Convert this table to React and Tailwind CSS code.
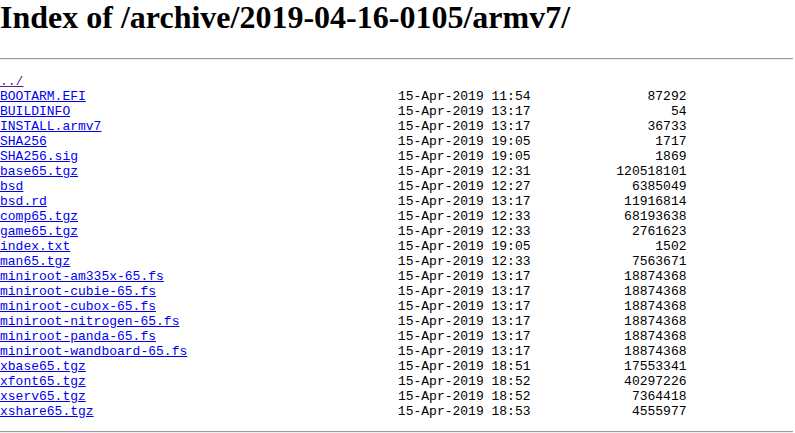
import React from "react";

const rows = [
  ["BOOTARM.EFI", "15-Apr-2019 11:54", "87292"],
  ["BUILDINFO", "15-Apr-2019 13:17", "54"],
  ["INSTALL.armv7", "15-Apr-2019 13:17", "36733"],
  ["SHA256", "15-Apr-2019 19:05", "1717"],
  ["SHA256.sig", "15-Apr-2019 19:05", "1869"],
  ["base65.tgz", "15-Apr-2019 12:31", "120518101"],
  ["bsd", "15-Apr-2019 12:27", "6385049"],
  ["bsd.rd", "15-Apr-2019 13:17", "11916814"],
  ["comp65.tgz", "15-Apr-2019 12:33", "68193638"],
  ["game65.tgz", "15-Apr-2019 12:33", "2761623"],
  ["index.txt", "15-Apr-2019 19:05", "1502"],
  ["man65.tgz", "15-Apr-2019 12:33", "7563671"],
  ["miniroot-am335x-65.fs", "15-Apr-2019 13:17", "18874368"],
  ["miniroot-cubie-65.fs", "15-Apr-2019 13:17", "18874368"],
  ["miniroot-cubox-65.fs", "15-Apr-2019 13:17", "18874368"],
  ["miniroot-nitrogen-65.fs", "15-Apr-2019 13:17", "18874368"],
  ["miniroot-panda-65.fs", "15-Apr-2019 13:17", "18874368"],
  ["miniroot-wandboard-65.fs", "15-Apr-2019 13:17", "18874368"],
  ["xbase65.tgz", "15-Apr-2019 18:51", "17553341"],
  ["xfont65.tgz", "15-Apr-2019 18:52", "40297226"],
  ["xserv65.tgz", "15-Apr-2019 18:52", "7364418"],
  ["xshare65.tgz", "15-Apr-2019 18:53", "4555977"],
];

export default function App() {
  return (
    <div className="bg-white text-black min-h-[433px] overflow-hidden">
      <h1
        className="m-0 -mt-px text-[32px] leading-[37px] font-bold whitespace-nowrap"
        style={{ fontFamily: '"Liberation Serif", "Times New Roman", serif' }}
      >
        Index of /archive/2019-04-16-0105/armv7/
      </h1>
      <div className="mt-[22px] mr-[2px] border-t border-t-[#9a9a9a] border-b border-b-[#eeeeee]" />
      <pre
        className="mt-[14px] mb-[12px] text-[13px] leading-[15px] text-black"
        style={{ fontFamily: '"Liberation Mono", "Courier New", monospace' }}
      >
        <a href="#" className="text-[#551a8b] underline">../</a>
        {"\n"}
        {rows.map(([name, date, size]) => (
          <React.Fragment key={name}>
            <a href="#" className="text-[#0000ee] underline">{name}</a>
            {" ".repeat(51 - name.length) + date + size.padStart(20, " ") + "\n"}
          </React.Fragment>
        ))}
      </pre>
      <div className="mr-[2px] border-t border-t-[#9a9a9a] border-b border-b-[#eeeeee]" />
    </div>
  );
}
